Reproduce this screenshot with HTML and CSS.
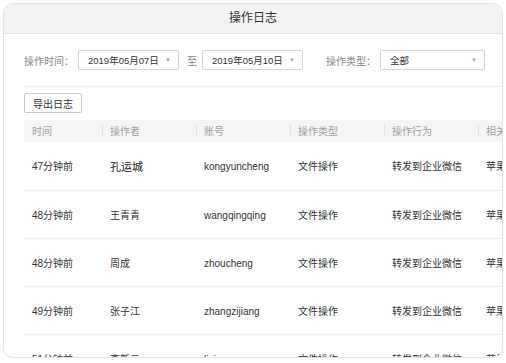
FILE: index.html
```html
<!DOCTYPE html>
<html lang="zh-CN">
<head>
    <meta charset="UTF-8">
    <meta name="viewport" content="width=device-width, initial-scale=1.0">
    <title>操作日志</title>
    <link rel="stylesheet" href="styles.css">
</head>
<body>

    <div class="panel">
        <!-- Title Bar -->
        <div class="panel-title">操作日志</div>

        <!-- Filters -->
        <div class="filters">
            <span class="filter-label">操作时间：</span>
            <div class="select select-date"><span>2019年05月07日</span><i class="arrow">▼</i></div>
            <span class="filter-sep">至</span>
            <div class="select select-date"><span>2019年05月10日</span><i class="arrow">▼</i></div>
            <span class="filter-label filter-type">操作类型：</span>
            <div class="select select-type"><span>全部</span><i class="arrow">▼</i></div>
        </div>

        <div class="toolbar">
            <button class="btn">导出日志</button>
        </div>

        <table class="log-table">
            <colgroup>
                <col class="col-first">
                <col><col><col><col><col>
            </colgroup>
            <thead>
                <tr>
                    <th>时间</th>
                    <th>操作者</th>
                    <th>账号</th>
                    <th>操作类型</th>
                    <th>操作行为</th>
                    <th>相关</th>
                </tr>
            </thead>
            <tbody id="log-body"></tbody>
        </table>
    </div>

    <script>
        const logs = [
            { time: '47分钟前', name: '孔运城', account: 'kongyuncheng' },
            { time: '48分钟前', name: '王青青', account: 'wangqingqing' },
            { time: '48分钟前', name: '周成', account: 'zhoucheng' },
            { time: '49分钟前', name: '张子江', account: 'zhangzijiang' },
            { time: '51分钟前', name: '李新云', account: 'lixinyun' }
        ];

        const body = document.getElementById('log-body');

        logs.forEach((log, index) => {
            const row = document.createElement('tr');
            row.innerHTML = `
                <td>${log.time}</td>
                <td class="${index === 0 ? 'name-strong' : ''}">${log.name}</td>
                <td>${log.account}</td>
                <td>文件操作</td>
                <td>转发到企业微信</td>
                <td>苹果</td>
            `;
            body.appendChild(row);
        });
    </script>

</body>
</html>
```

FILE: styles.css
```css
body {
    font-family: "Liberation Sans", "Noto Sans CJK SC", sans-serif;
    background-color: #ffffff;
    color: #333;
    margin: 0;
    padding: 3px;
}

.panel {
    width: 498px;
    height: 353px;
    border: 1px solid #e3e3e3;
    border-radius: 10px;
    overflow: hidden;
    background-color: #fff;
}

.panel-title {
    height: 29px;
    line-height: 29px;
    text-align: center;
    font-size: 12px;
    color: #333;
    background-color: #f3f3f3;
    border-bottom: 1px solid #e6e6e6;
}

/* Filter row */
.filters {
    display: flex;
    align-items: center;
    margin-left: 20px;
    padding: 16px 0;
    border-bottom: 1px solid #eeeeee;
    font-size: 10px;
}

.filter-label {
    color: #888;
    margin-right: 4px;
}

.filter-type {
    margin-left: 23px;
}

.filter-sep {
    color: #888;
    margin: 0 5px 0 8px;
}

.select {
    box-sizing: border-box;
    height: 20px;
    display: flex;
    align-items: center;
    justify-content: space-between;
    padding: 0 7px 0 9px;
    border: 1px solid #d4d4d4;
    border-radius: 2px;
    color: #333;
    font-size: 9.5px;
}

.select-date {
    width: 101px;
}

.select-type {
    width: 105px;
}

.arrow {
    font-style: normal;
    font-size: 6px;
    color: #aaa;
}

.toolbar {
    margin-left: 20px;
    padding: 6px 0 7px;
}

.btn {
    box-sizing: border-box;
    height: 20px;
    padding: 0 8px;
    font-family: inherit;
    font-size: 10px;
    color: #333;
    background-color: #fff;
    border: 1px solid #c8c8c8;
    border-radius: 2px;
}

/* Log table */
.log-table {
    margin-left: 20px;
    width: 548px;
    table-layout: fixed;
    border-collapse: collapse;
    font-size: 10px;
}

.log-table col {
    width: 94px;
}

.log-table .col-first {
    width: 78px;
}

.log-table th {
    position: relative;
    box-sizing: border-box;
    height: 22px;
    padding: 2px 8px 0;
    line-height: 14px;
    text-align: left;
    font-weight: normal;
    color: #a0a0a0;
    background-color: #f5f5f5;
    white-space: nowrap;
}

.log-table th + th::before {
    content: "";
    position: absolute;
    left: 0;
    top: 5px;
    height: 12px;
    border-left: 1px solid #e2e2e2;
}

.log-table td {
    box-sizing: border-box;
    height: 48px;
    padding: 3px 8px 0;
    line-height: 14px;
    color: #333;
    border-bottom: 1px solid #efefef;
    white-space: nowrap;
    overflow: hidden;
}

.log-table td.name-strong {
    font-size: 11px;
    color: #222;
}
```
